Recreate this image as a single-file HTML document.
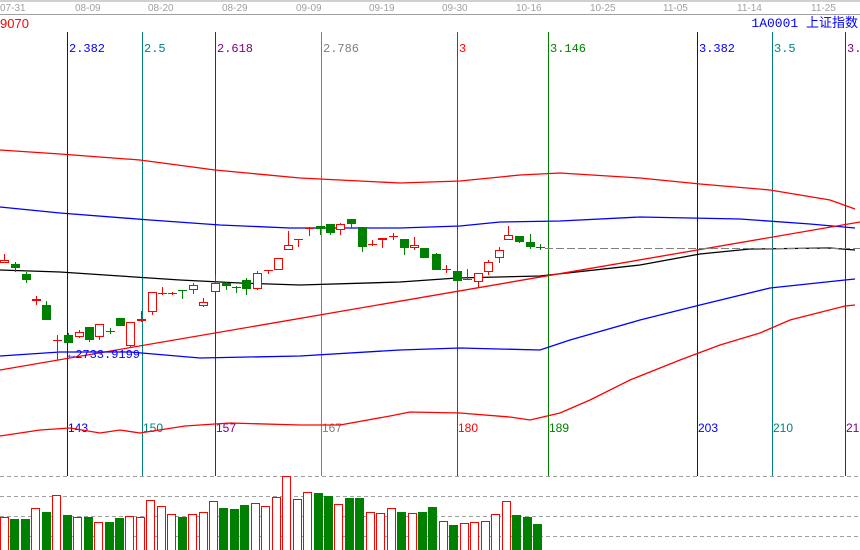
<!DOCTYPE html>
<html><head><meta charset="utf-8"><style>
html,body{margin:0;padding:0;background:#fff;width:860px;height:550px;overflow:hidden}
svg{display:block;font-family:"Liberation Mono","Noto Sans CJK SC",monospace}
</style></head><body>
<svg id="s" width="860" height="550" viewBox="0 0 860 550" xmlns="http://www.w3.org/2000/svg" shape-rendering="crispEdges">
<g font-family="Liberation Sans, sans-serif" font-size="10" fill="#a0a0a0">
<text x="0" y="11">07-31</text><text x="75" y="11">08-09</text><text x="148" y="11">08-20</text><text x="222" y="11">08-29</text><text x="296" y="11">09-09</text><text x="369" y="11">09-19</text><text x="442" y="11">09-30</text><text x="516" y="11">10-16</text><text x="590" y="11">10-25</text><text x="663" y="11">11-05</text><text x="737" y="11">11-14</text><text x="811" y="11">11-25</text>
</g>
<line x1="0" y1="1" x2="860" y2="1" stroke="#a0a0a0"/>
<line x1="0" y1="14.5" x2="860" y2="14.5" stroke="#a0a0a0"/>
<text x="0" y="28" font-family="Liberation Sans, sans-serif" font-size="13" fill="#ff0000">9070</text>
<text x="858" y="27" text-anchor="end" font-size="13" fill="#0000ff">1A0001 上证指数</text>
<g id="v"></g>
<g fill="none" stroke-width="1.3" shape-rendering="auto">
<polyline stroke="#ff0000" points="0,150 60,154 140,160 215,170 300,178 400,183 460,181 520,175 560,173 640,178 700,184 770,190 830,200 855,209"/>
<polyline stroke="#0000ff" points="0,207 60,213 150,220 220,225 290,228 400,228 460,226 500,222 560,221 640,217 740,219 810,224 855,228"/>
<polyline stroke="#000" points="0,270 60,272 120,276 180,280 240,283 300,285 400,282 457,278 540,276 640,265 700,254 750,249 830,248 855,250"/>
<line stroke="#ff0000" x1="0" y1="370" x2="860" y2="222"/>
<polyline stroke="#0000ff" points="0,356 60,352 130,352 200,358 300,356 400,350 460,348 540,350 570,340 640,320 700,305 770,288 845,280 855,279"/>
<polyline stroke="#ff0000" points="0,436 40,430 70,428 100,433 120,430 140,433 185,426 230,423 300,425 340,425 390,416 410,412 460,413 510,417 530,420 560,413 590,400 630,380 680,360 720,345 760,333 790,320 845,306 855,305"/>
</g>
<line x1="545" y1="248.5" x2="860" y2="248.5" stroke="#808080" stroke-dasharray="8,3"/>
<g id="c"></g>
<text x="68" y="358" font-size="12" fill="#0000ff">←2733.9199</text>
<g id="b"></g>
</svg>
<script>
var NS="http://www.w3.org/2000/svg";
function el(p,t,a){var e=document.createElementNS(NS,t);for(var k in a)e.setAttribute(k,a[k]);document.getElementById(p).appendChild(e);return e;}
var fib=[[67,"#0000ff","2.382","143"],[142,"#008080","2.5","150"],[215,"#800080","2.618","157"],[321,"#808080","2.786","167"],[457,"#ff0000","3","180"],[548,"#008000","3.146","189"],[697,"#0000ff","3.382","203"],[772,"#008080","3.5","210"],[845,"#800080","3.618","217"]];
fib.forEach(function(f){
el("v","line",{x1:f[0]+.5,y1:32,x2:f[0]+.5,y2:476,stroke:f[1]});
var t=el("v","text",{x:f[0]+2,y:52,"font-size":"12",fill:f[1]});t.textContent=f[2];
var u=el("v","text",{x:f[0]+1,y:432,"font-size":"12",fill:f[1],"font-family":"Liberation Sans, sans-serif"});u.textContent=f[3];
});
[476,496,516,536].forEach(function(y){el("v","line",{x1:0,y1:y+.5,x2:860,y2:y+.5,stroke:"#a0a0a0","stroke-dasharray":"4,3"});});
var C=[[4,260,263,254,263,'r'],[15,264,268,262,272,'g'],[26,274,280,272,283,'g'],[36,299,301,296,305,'r'],[46,305,320,301,320,'g'],[57,340,340,335,360,'r'],[68,335,343,333,343,'g'],[79,332,337,330,338,'r'],[89,327,340,327,342,'g'],[99,324,337,324,340,'r'],[110,331,331,328,334,'g'],[120,318,326,318,326,'g'],[130,322,346,322,348,'r'],[141,319,321,311,322,'r'],[152,292,312,292,315,'r'],[162,293,293,287,295,'r'],[172,293,294,292,295,'r'],[182,290,290,290,299,'g'],[193,285,290,283,294,'r'],[203,302,306,298,307,'r'],[215,283,292,275,292,'r'],[226,283,286,282,290,'g'],[236,287,287,286,293,'g'],[246,280,289,278,295,'g'],[257,273,289,271,290,'r'],[268,270,271,270,274,'r'],[278,258,270,258,270,'r'],[288,245,250,231,250,'r'],[298,239,240,239,247,'r'],[309,228,228,227,236,'r'],[320,226,229,226,235,'g'],[330,224,233,224,235,'g'],[340,224,230,223,235,'r'],[351,219,224,219,228,'g'],[362,227,247,227,252,'g'],[372,244,245,240,246,'r'],[382,238,240,238,248,'r'],[393,236,236,233,240,'r'],[404,239,248,239,255,'g'],[414,245,248,237,250,'r'],[424,248,258,248,258,'g'],[436,254,270,253,270,'g'],[446,269,269,265,273,'r'],[457,271,281,268,281,'g'],[467,279,280,269,280,'r'],[478,273,282,273,288,'r'],[488,262,272,260,275,'r'],[499,250,258,247,263,'r'],[508,235,240,226,240,'r'],[519,236,242,236,243,'g'],[530,242,247,234,249,'g'],[540,247,247,244,250,'g']];
C.forEach(function(c){
var col=c[5]=='r'?"#ff0000":"#008000";
el("c","line",{x1:c[0]+.5,y1:c[3],x2:c[0]+.5,y2:c[4],stroke:col});
if(c[2]-c[1]<2){el("c","rect",{x:c[0]-4,y:c[1],width:9,height:Math.max(1,c[2]-c[1]),fill:col});}
else if(c[5]=='r'){el("c","rect",{x:c[0]-4+.5,y:c[1]+.5,width:8,height:c[2]-c[1]-1,fill:"#fff",stroke:col});}
else{el("c","rect",{x:c[0]-4,y:c[1],width:9,height:c[2]-c[1],fill:col});}
});
var V=[[517,'r'],[519,'g'],[519,'g'],[508,'r'],[512,'g'],[495,'r'],[515,'g'],[517,'r'],[517,'g'],[522,'r'],[522,'g'],[518,'g'],[516,'r'],[517,'r'],[500,'r'],[506,'r'],[514,'r'],[517,'g'],[514,'r'],[512,'r'],[501,'r'],[508,'g'],[509,'g'],[505,'g'],[503,'r'],[506,'r'],[497,'r'],[476,'r'],[499,'r'],[492,'r'],[493,'g'],[496,'g'],[504,'r'],[498,'g'],[498,'g'],[512,'r'],[513,'r'],[508,'r'],[512,'g'],[513,'r'],[512,'g'],[507,'g'],[521,'r'],[525,'g'],[523,'r'],[522,'r'],[521,'r'],[514,'r'],[501,'r'],[515,'g'],[517,'g'],[524,'g']];
V.forEach(function(v,i){
var x=Math.round(i*10.45);
if(v[1]=='r')el("b","rect",{x:x+.5,y:v[0]+.5,width:8,height:550-v[0],fill:"#fff",stroke:"#ff0000"});
else el("b","rect",{x:x,y:v[0],width:9,height:550-v[0],fill:"#008000"});
});
</script>
</body></html>
